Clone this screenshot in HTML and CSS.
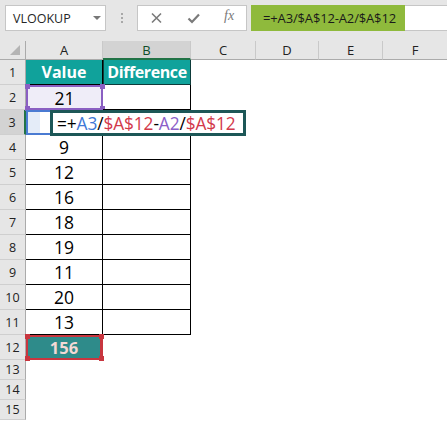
FILE: index.html
```html
<!DOCTYPE html>
<html>
<head>
<meta charset="utf-8">
<link rel="stylesheet" href="styles.css">
</head>
<body>
<div class="topbar">
  <div class="namebox"><span class="nbtext">VLOOKUP</span><span class="nbarrow"></span></div>
  <div class="dots"><i></i><i></i><i></i></div>
  <div class="fxbox">
    <svg class="fxicons" width="110" height="24" viewBox="0 0 110 24">
      <path d="M14 7.5 L23 16.5 M23 7.5 L14 16.5" stroke="#7a7a7a" stroke-width="1.6" fill="none"/>
      <path d="M50.5 12.5 L54 16 L61 8.5" stroke="#7a7a7a" stroke-width="2.2" fill="none"/>
    </svg>
    <span class="fxlabel">fx</span>
  </div>
  <div class="formulabar"><span class="fbtext">=+A3/$A$12-A2/$A$12</span></div>
</div>
<div class="sheet">
  <div class="ch corner"><svg width="14" height="14" viewBox="0 0 14 14"><polygon points="12,2 12,12 2,12" fill="#b4b4b4"/></svg></div>
  <div class="ch">A</div>
  <div class="ch act">B</div>
  <div class="ch">C</div>
  <div class="ch">D</div>
  <div class="ch">E</div>
  <div class="ch last">F</div>

  <div class="rh">1</div>
  <div class="c hd">Value</div>
  <div class="c hd hdb">Difference</div>
  <div class="e"></div><div class="e"></div><div class="e"></div><div class="e"></div>

  <div class="rh">2</div>
  <div class="c ref purple">21<span class="h tl"></span><span class="h tr"></span><span class="h bl"></span><span class="h br"></span></div>
  <div class="c"></div>
  <div class="e"></div><div class="e"></div><div class="e"></div><div class="e"></div>

  <div class="rh ract">3</div>
  <div class="c ref blue"><span class="gap"></span></div>
  <div class="c"></div>
  <div class="e"></div><div class="e"></div><div class="e"></div><div class="e"></div>

  <div class="rh">4</div>
  <div class="c">9</div>
  <div class="c"></div>
  <div class="e"></div><div class="e"></div><div class="e"></div><div class="e"></div>

  <div class="rh">5</div>
  <div class="c">12</div>
  <div class="c"></div>
  <div class="e"></div><div class="e"></div><div class="e"></div><div class="e"></div>

  <div class="rh">6</div>
  <div class="c">16</div>
  <div class="c"></div>
  <div class="e"></div><div class="e"></div><div class="e"></div><div class="e"></div>

  <div class="rh">7</div>
  <div class="c">18</div>
  <div class="c"></div>
  <div class="e"></div><div class="e"></div><div class="e"></div><div class="e"></div>

  <div class="rh">8</div>
  <div class="c">19</div>
  <div class="c"></div>
  <div class="e"></div><div class="e"></div><div class="e"></div><div class="e"></div>

  <div class="rh">9</div>
  <div class="c">11</div>
  <div class="c"></div>
  <div class="e"></div><div class="e"></div><div class="e"></div><div class="e"></div>

  <div class="rh">10</div>
  <div class="c">20</div>
  <div class="c"></div>
  <div class="e"></div><div class="e"></div><div class="e"></div><div class="e"></div>

  <div class="rh">11</div>
  <div class="c">13</div>
  <div class="c"></div>
  <div class="e"></div><div class="e"></div><div class="e"></div><div class="e"></div>

  <div class="rh">12</div>
  <div class="e ref red total">156<span class="h tl"></span><span class="h tr"></span><span class="h bl"></span><span class="h br"></span></div>
  <div class="e"></div>
  <div class="e"></div><div class="e"></div><div class="e"></div><div class="e"></div>

  <div class="rh">13</div>
  <div class="e"></div><div class="e"></div><div class="e"></div><div class="e"></div><div class="e"></div><div class="e"></div>
  <div class="rh">14</div>
  <div class="e"></div><div class="e"></div><div class="e"></div><div class="e"></div><div class="e"></div><div class="e"></div>
  <div class="rh">15</div>
  <div class="e"></div><div class="e"></div><div class="e"></div><div class="e"></div><div class="e"></div><div class="e"></div>

  <div class="editbox"><span class="k">=+</span><span class="cb">A3</span><span class="k">/</span><span class="cr">$A$12</span><span class="k">-</span><span class="cp">A2</span><span class="k">/</span><span class="cr">$A$12</span></div>
</div>
</body>
</html>
```
FILE: styles.css
```css
* { box-sizing: border-box; }
html, body { margin: 0; padding: 0; background: #ffffff; }
body {
  width: 447px;
  height: 422px;
  overflow: hidden;
  font-family: "Open Sans", "Liberation Sans", sans-serif;
  color: #000;
}

.topbar {
  height: 41px;
  background: #e6e6e6;
  display: flex;
  align-items: flex-start;
  padding: 5px 0 0 5px;
}
.namebox {
  width: 101px;
  height: 26px;
  background: #fff;
  border: 1px solid #c6c6c6;
  display: flex;
  align-items: center;
  padding-left: 7px;
  position: relative;
  font-size: 12.5px;
  color: #262626;
}
.nbarrow {
  position: absolute;
  left: 87px;
  top: 10px;
  width: 0;
  height: 0;
  border-left: 4px solid transparent;
  border-right: 4px solid transparent;
  border-top: 4px solid #777;
}
.dots {
  margin-left: 15px;
  margin-top: 8px;
  display: flex;
  flex-direction: column;
  gap: 2px;
}
.dots i {
  display: block;
  width: 2px;
  height: 2px;
  background: #a8a8a8;
}
.fxbox {
  margin-left: 14px;
  width: 110px;
  height: 26px;
  background: #fff;
  border: 1px solid #c6c6c6;
  position: relative;
}
.fxicons { display: block; }
.fxlabel {
  position: absolute;
  left: 86px;
  top: 2px;
  font-family: "Liberation Serif", serif;
  font-style: italic;
  font-size: 14px;
  color: #7a7a7a;
}
.formulabar {
  margin-left: 4px;
  flex: 1;
  height: 26px;
  background: #fff;
  border: 1px solid #c6c6c6;
  border-right: none;
  display: flex;
}
.fbtext {
  width: 154px;
  background: #8fba3c;
  display: flex;
  align-items: center;
  padding-left: 12px;
  font-size: 13px;
  letter-spacing: -0.15px;
  color: #1a1a1a;
  margin: -1px 0 -1px -1px;
}

.sheet {
  position: relative;
  display: grid;
  grid-template-columns: 26px 77px 88px 65px 63px 64px 64px;
  grid-template-rows: 19px repeat(12, 25px) repeat(3, 20px);
}
.ch {
  background: #e6e6e6;
  border-right: 1px solid #c9c9c9;
  border-bottom: 1px solid #ababab;
  display: flex;
  align-items: center;
  justify-content: center;
  font-size: 13px;
  color: #222;
}
.ch.last { border-right: none; }
.ch.corner { align-items: flex-end; justify-content: flex-start; padding: 0 0 2px 8px; border-right: 1px solid #ababab; }
.ch.corner svg { display: block; }
.ch.act {
  background: #d3d3d3;
  border-bottom: 2px solid #217346;
  color: #0f4d2a;
}
.rh {
  background: #e6e6e6;
  border-right: 1px solid #ababab;
  border-bottom: 1px solid #cfcfcf;
  display: flex;
  align-items: center;
  justify-content: center;
  font-size: 12.5px;
  color: #222;
}
.rh.ract {
  background: #d3d3d3;
  border-right: 2px solid #217346;
}
.c {
  border-right: 1px solid #000;
  border-bottom: 1px solid #000;
  display: flex;
  align-items: center;
  justify-content: center;
  font-size: 17.5px;
  position: relative;
}
.e {
  display: flex;
  align-items: center;
  justify-content: center;
  position: relative;
}
.hd {
  background: #10a29b;
  color: #fff;
  font-weight: 700;
  font-size: 16px;
}
.hdb {
  border: 1px solid #0d3b3a;
  border-top: none;
  letter-spacing: -0.4px;
}

.ref { border: 2px solid; }
.purple { border-color: #8a5fc2; background: #efedf8; }
.blue { border-color: #4a7bd2; background: #e4ecf8; justify-content: flex-start; }
.blue .gap { display: block; width: 10px; height: 100%; margin-left: 12px; background: #fff; }
.red { border-color: #c8363f; }
.total {
  background: #2e8b8a;
  color: #f3d8d5;
  font-weight: 700;
  font-size: 16.5px;
  border-right-width: 3px;
}
.h {
  position: absolute;
  width: 5px;
  height: 5px;
}
.purple .h { background: #8a5fc2; }
.red .h { background: #c8363f; }
.h.tl { left: -3px; top: -3px; }
.h.tr { right: -4px; top: -3px; }
.h.bl { left: -3px; bottom: -3px; }
.h.br { right: -4px; bottom: -3px; }

.editbox {
  position: absolute;
  left: 50px;
  top: 69px;
  width: 196px;
  height: 26px;
  background: #fff;
  border: 3px solid #1d5757;
  display: flex;
  align-items: center;
  padding-left: 4px;
  font-size: 17.3px;
  letter-spacing: -0.1px;
  white-space: nowrap;
}
.k { color: #000; }
.cb { color: #3f78d6; }
.cr { color: #d2394b; }
.cp { color: #8b5ec8; }
```
